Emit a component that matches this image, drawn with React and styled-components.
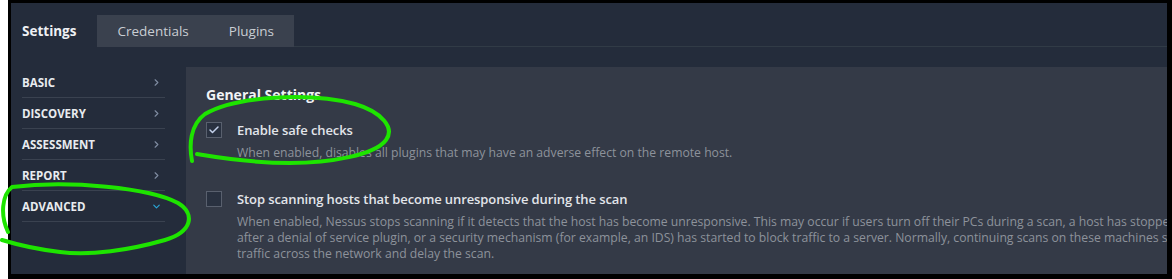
import React from 'react';
import styled, { createGlobalStyle } from 'styled-components';
import { ChevronRight, ChevronDown, Check } from 'lucide-react';

const GlobalStyle = createGlobalStyle`
	html, body {
		margin: 0;
		padding: 0;
		background: #ffffff;
	}
	body {
		font-family: 'Open Sans', 'Liberation Sans', sans-serif;
		-webkit-font-smoothing: antialiased;
	}
`;

const Page = styled.div`
	position: relative;
	width: 1172px;
	height: 279px;
	overflow: hidden;
`;

const Frame = styled.div`
	margin-left: 8px;
	width: 1164px;
	height: 279px;
	box-sizing: border-box;
	padding: 3px 5px 5px 3px;
	background: #000000;
`;

const Screen = styled.div`
	height: 100%;
	display: flex;
	flex-direction: column;
	background: #242c3b;
	overflow: hidden;
`;

const TabBar = styled.div`
	height: 43px;
	flex-shrink: 0;
	display: flex;
	align-items: flex-end;
	border-bottom: 1px solid #313b46;
`;

const Tab = styled.div`
	height: 32px;
	display: flex;
	align-items: center;
	padding: ${p => (p.$active ? '0 21px 0 11px' : '0 20px')};
	margin-bottom: -1px;
	background: ${p => (p.$active ? '#242c3b' : '#3a414e')};
	color: ${p => (p.$active ? '#eef0f3' : '#c9cdd3')};
	font-size: 13.5px;
	font-weight: ${p => (p.$active ? 700 : 400)};
`;

const Body = styled.div`
	flex: 1;
	display: flex;
	margin-top: 20px;
	min-height: 0;
`;

const Sidebar = styled.ul`
	list-style: none;
	margin: 0;
	padding: 0 21px 0 11px;
	width: 143px;
	flex-shrink: 0;
`;

const NavItem = styled.li`
	height: 31px;
	display: flex;
	align-items: center;
	justify-content: space-between;
	padding-top: 1px;
	box-sizing: border-box;
	border-bottom: 1px solid #3a4250;
	color: #e8ebef;
	font-size: 11.5px;
	font-weight: 700;

	svg {
		margin-right: 3px;
		color: ${p => (p.$open ? '#2aa6d6' : '#7f8ca1')};
	}
`;

const Panel = styled.div`
	flex: 1;
	background: #343a47;
	padding: 18px 20px;
	overflow: hidden;
`;

const Heading = styled.h3`
	margin: 0 0 16px;
	font-size: 14px;
	line-height: 20px;
	font-weight: 700;
	color: #f1f3f6;
`;

const Option = styled.div`
	display: grid;
	grid-template-columns: 16px 1fr;
	column-gap: 15px;
	margin-bottom: ${p => (p.$last ? 0 : '29px')};
`;

const Box = styled.div`
	width: 16px;
	height: 16px;
	margin-top: 1px;
	box-sizing: border-box;
	border: 1px solid #59606e;
	background: #293140;
	display: flex;
	align-items: center;
	justify-content: center;
	color: #c3d0ea;
`;

const Label = styled.div`
	font-size: 13px;
	line-height: 18px;
	font-weight: 600;
	letter-spacing: -0.1px;
	color: #e2e5ea;
	white-space: nowrap;
`;

const Desc = styled.div`
	grid-column: 2;
	margin-top: 6px;
	font-size: 12.2px;
	line-height: 16px;
	color: #8d929b;
	white-space: nowrap;
`;

const Marker = styled.svg`
	position: absolute;
	top: 0;
	left: 0;
	pointer-events: none;

	path {
		fill: none;
		stroke: #1ee400;
		stroke-width: 4;
		stroke-linecap: round;
		stroke-linejoin: round;
	}
`;

const sections = ['BASIC', 'DISCOVERY', 'ASSESSMENT', 'REPORT', 'ADVANCED'];

export default function App() {
	return (
		<Page>
			<GlobalStyle />
			<Frame>
				<Screen>
					<TabBar>
						<Tab $active>Settings</Tab>
						<Tab>Credentials</Tab>
						<Tab>Plugins</Tab>
					</TabBar>
					<Body>
						<Sidebar>
							{sections.map(s => (
								<NavItem key={s} $open={s === 'ADVANCED'}>
									{s}
									{s === 'ADVANCED' ? (
										<ChevronDown size={11} strokeWidth={2.5} />
									) : (
										<ChevronRight size={11} strokeWidth={2.5} />
									)}
								</NavItem>
							))}
						</Sidebar>
						<Panel>
							<Heading>General Settings</Heading>
							<Option>
								<Box>
									<Check size={12} strokeWidth={3} />
								</Box>
								<Label>Enable safe checks</Label>
								<Desc>When enabled, disables all plugins that may have an adverse effect on the remote host.</Desc>
							</Option>
							<Option $last>
								<Box />
								<Label>Stop scanning hosts that become unresponsive during the scan</Label>
								<Desc>
									When enabled, Nessus stops scanning if it detects that the host has become unresponsive. This may occur if users turn off their PCs during a scan, a host has stopped responding
									<br />
									after a denial of service plugin, or a security mechanism (for example, an IDS) has started to block traffic to a server. Normally, continuing scans on these machines sends unnecessary
									<br />
									traffic across the network and delay the scan.
								</Desc>
							</Option>
						</Panel>
					</Body>
				</Screen>
			</Frame>
			{/* hand-drawn highlight marks over the screenshot */}
			<Marker width="1172" height="279" viewBox="0 0 1172 279">
				<path d="M 192 161 C 189 145, 190 125, 205 114 C 235 96, 310 92, 355 104 C 382 112, 395 128, 386 140 C 375 155, 330 163, 290 163 C 250 163, 215 157, 197 154" />
				<path d="M 8 232 C 0 215, 2 195, 12 187 C 70 180, 150 188, 178 203 C 196 214, 192 232, 165 240 C 130 250, 90 256, 60 252 C 35 249, 15 244, 2 240" />
			</Marker>
		</Page>
	);
}
